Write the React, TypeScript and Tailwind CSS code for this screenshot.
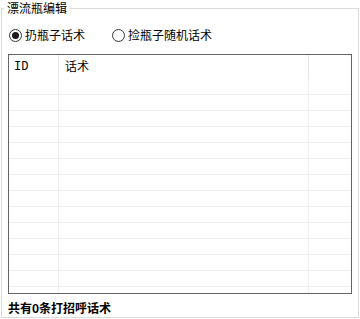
export default function App() {
  const rows = Array.from({ length: 14 });

  return (
    <div className="w-[360px] h-[319px] bg-white font-['Noto_Sans_CJK_SC','Noto_Sans',sans-serif] text-[12px] text-black">
      {/* group box */}
      <fieldset className="ml-[1px] w-[358px] h-[318px] border border-[#dcdcdc]">
        <legend className="ml-[2px] px-[3px] leading-[16px] text-[12px]">漂流瓶编辑</legend>

        <div className="pl-[6px]">
          {/* radio buttons */}
          <div className="flex items-center h-[16px] mt-[11px] pl-[1px]">
            <label className="flex items-center">
              <span className="flex items-center justify-center w-[13px] h-[13px] rounded-full border border-[#333333] bg-white">
                <span className="w-[7px] h-[7px] rounded-full bg-[#1a1a1a]"></span>
              </span>
              <span className="ml-[3px] leading-[16px]">扔瓶子话术</span>
            </label>
            <label className="flex items-center ml-[27px]">
              <span className="w-[13px] h-[13px] rounded-full border border-[#333333] bg-white"></span>
              <span className="ml-[3px] leading-[16px]">捡瓶子随机话术</span>
            </label>
          </div>

          {/* list view */}
          <div className="mt-[11px] w-[344px] h-[240px] border border-[#646464] overflow-hidden bg-white">
            <div className="grid grid-cols-[50px_250px_1fr] h-[24px]">
              <div className="border-r border-[#e5e5e5] pl-[5px] leading-[24px] font-['Liberation_Mono',monospace] text-[12px]">ID</div>
              <div className="border-r border-[#e5e5e5] pl-[6px] leading-[22px]">话术</div>
              <div></div>
            </div>
            {rows.map((_, i) => (
              <div key={i} className="grid grid-cols-[50px_250px_1fr] h-[16px] border-b border-[#f0f0f0]">
                <div className="border-r border-[#f0f0f0]"></div>
                <div className="border-r border-[#f0f0f0]"></div>
                <div></div>
              </div>
            ))}
          </div>

          <p className="mt-[6px] font-bold leading-[16px]">共有0条打招呼话术</p>
        </div>
      </fieldset>
    </div>
  );
}
